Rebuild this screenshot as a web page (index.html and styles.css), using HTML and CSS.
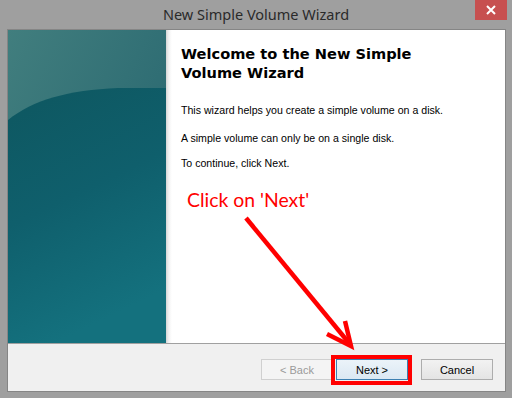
FILE: index.html
```html
<!DOCTYPE html>
<html>
<head>
<meta charset="utf-8">
<link rel="stylesheet" href="styles.css">
</head>
<body>
<div class="window">
  <div class="titlebar">
    <span class="title">New Simple Volume Wizard</span>
    <div class="close">
      <svg width="10" height="10" viewBox="0 0 10 10"><path d="M1 1 L9 9 M9 1 L1 9" stroke="#fff" stroke-width="2"/></svg>
    </div>
  </div>
  <div class="client">
    <div class="main">
      <div class="side">
        <svg width="158" height="313" viewBox="0 0 158 313" preserveAspectRatio="none">
          <defs>
            <linearGradient id="gTop" x1="0" y1="0" x2="1" y2="1">
              <stop offset="0" stop-color="#417e7e"/>
              <stop offset="1" stop-color="#22616c"/>
            </linearGradient>
            <linearGradient id="gLow" x1="0" y1="0" x2="0.3" y2="1">
              <stop offset="0" stop-color="#0e5760"/>
              <stop offset="0.5" stop-color="#0f5f6c"/>
              <stop offset="1" stop-color="#14717e"/>
            </linearGradient>
          </defs>
          <rect width="158" height="313" fill="url(#gTop)"/>
          <path d="M0 90 C25 70 60 60 110 58 L158 58 L158 313 L0 313 Z" fill="url(#gLow)"/>
        </svg>
      </div>
      <div class="content">
        <h1 class="heading">Welcome to the New Simple<br>Volume Wizard</h1>
        <p class="text first">This wizard helps you create a simple volume on a disk.</p>
        <p class="text">A simple volume can only be on a single disk.</p>
        <p class="text third">To continue, click Next.</p>
        <div class="annot">Click on 'Next'</div>
      </div>
    </div>
    <div class="buttons">
      <div class="btn disabled">&lt; Back</div>
      <div class="btn default">Next &gt;</div>
      <div class="btn cancel">Cancel</div>
    </div>
  </div>
  <svg class="arrow" width="512" height="398" viewBox="0 0 512 398">
    <path d="M246 218 L349 343" stroke="#ff0000" stroke-width="4.5" fill="none"/>
    <path d="M327 334 L351 346 L345 321" stroke="#ff0000" stroke-width="4.5" fill="none" stroke-linejoin="miter"/>
  </svg>
  <div class="highlight"></div>
</div>
</body>
</html>
```

FILE: styles.css
```css
html, body {
  margin: 0;
  padding: 0;
}
body {
  width: 512px;
  height: 398px;
  overflow: hidden;
  background: #9f9f9f;
}
.window {
  position: relative;
  width: 512px;
  height: 398px;
  background: #9f9f9f;
  display: flex;
  flex-direction: column;
}
.titlebar {
  position: relative;
  height: 29px;
  display: flex;
  align-items: center;
  justify-content: center;
}
.title {
  font-family: "Noto Sans", "Open Sans", sans-serif;
  font-size: 14.5px;
  color: #2a2a2a;
  margin-top: -1px;
}
.close {
  position: absolute;
  top: 0;
  left: 475px;
  width: 32px;
  height: 20px;
  background: #c75050;
  display: flex;
  align-items: center;
  justify-content: center;
}
.client {
  margin: 0 6px 6px 7px;
  border: 1px solid #858585;
  display: flex;
  flex-direction: column;
  height: 361px;
}
.main {
  height: 313px;
  display: flex;
  background: #fff;
}
.side {
  width: 158px;
  height: 313px;
  flex: none;
}
.side svg {
  display: block;
}
.content {
  flex: 1;
  padding: 14px 0 0 15px;
  background: linear-gradient(to right, #d4d4d4 0px, #ececec 2px, #f8f8f8 4px, #ffffff 6px);
}
.heading {
  margin: 0;
  font-family: "DejaVu Sans", Verdana, sans-serif;
  font-weight: bold;
  font-size: 14.6px;
  line-height: 19px;
  color: #000;
}
.text {
  margin: 0;
  font-family: "Liberation Sans", Arial, sans-serif;
  font-size: 10.6px;
  line-height: 14px;
  color: #000;
}
.text.first {
  margin-top: 21px;
}
.text + .text {
  margin-top: 14px;
}
.text.third {
  margin-top: 11px;
}
.annot {
  margin: 18px 0 0 6px;
  font-family: Lato, "Noto Sans", sans-serif;
  font-size: 19.4px;
  line-height: 24px;
  color: #ff0000;
}
.buttons {
  border-top: 1px solid #a0a0a0;
  background: #f0f0f0;
  display: flex;
  justify-content: flex-end;
  align-items: flex-start;
  padding: 15px 12px 0 0;
  box-sizing: border-box;
  height: 48px;
}
.btn {
  width: 72px;
  height: 21px;
  box-sizing: border-box;
  border: 1px solid #adadad;
  background: linear-gradient(#f2f2f2, #e4e4e4);
  font-family: "Liberation Sans", Arial, sans-serif;
  font-size: 11px;
  color: #000;
  display: flex;
  align-items: center;
  justify-content: center;
}
.btn.disabled {
  border-color: #d0d0d0;
  background: #f4f4f4;
  color: #9a9a9a;
  margin-right: 3px;
}
.btn.default {
  border-color: #3c7fb1;
  background: linear-gradient(#ebf3f9, #dbe8f3);
  margin-right: 13px;
}
.arrow {
  position: absolute;
  left: 0;
  top: 0;
  pointer-events: none;
}
.highlight {
  position: absolute;
  left: 331px;
  top: 355px;
  width: 81px;
  height: 30px;
  box-sizing: border-box;
  border: 4px solid #ff0000;
}
```
